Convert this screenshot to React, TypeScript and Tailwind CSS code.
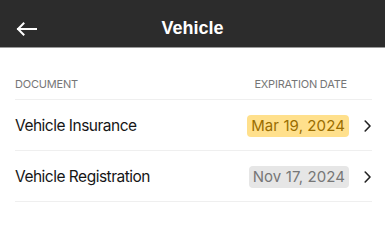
type Doc = {
  name: string;
  date: string;
  tone: 'warn' | 'muted';
};

const docs: Doc[] = [
  { name: 'Vehicle Insurance', date: 'Mar 19, 2024', tone: 'warn' },
  { name: 'Vehicle Registration', date: 'Nov 17, 2024', tone: 'muted' },
];

function BackArrow() {
  return (
    <svg width="22" height="14" viewBox="0 0 22 14" fill="none" stroke="white" strokeWidth={2} strokeLinecap="square">
      <path d="M2 7h18" />
      <path d="M7.5 1.5L2 7l5.5 5.5" />
    </svg>
  );
}

function Chevron() {
  return (
    <svg width="7" height="12" viewBox="0 0 7 12" fill="none" stroke="#222" strokeWidth={1.6} strokeLinecap="round" strokeLinejoin="round">
      <path d="M1.2 1l4.8 5-4.8 5" />
    </svg>
  );
}

export default function App() {
  return (
    <div className="w-[385px] h-[243px] bg-white font-['Inter',sans-serif]">
      {/* Top bar */}
      <div className="relative h-[48px] bg-[#2c2c2c] border-b border-[#9a9a9a] flex items-center justify-center pt-[10px]">
        <button type="button" className="absolute left-[16px] top-[22px]" aria-label="Back">
          <BackArrow />
        </button>
        <h1 className="text-white text-[18px] font-bold font-['Liberation_Sans',Arial,sans-serif]">
          Vehicle
        </h1>
      </div>

      <div className="ml-[15px] mr-[13px]">
        {/* Column headings */}
        <div className="h-[52px] flex items-end justify-between pb-[7px] pr-[25px] border-b border-[#efefef] text-[11px] text-[#767676] tracking-[-0.2px]">
          <span>DOCUMENT</span>
          <span>EXPIRATION DATE</span>
        </div>

        {docs.map((doc) => (
          <div key={doc.name} className="h-[51px] flex items-center justify-between border-b border-[#efefef] pt-[2px]">
            <span className="text-[15.5px] text-[#161616] tracking-[-0.5px]">{doc.name}</span>
            <div className="flex items-center">
              <span
                className={
                  doc.tone === 'warn'
                    ? 'h-[22px] px-[4px] rounded-[4px] flex items-center text-[15px] tracking-[0.1px] bg-[#ffe08c] text-[#9a6d00]'
                    : 'h-[22px] px-[4px] rounded-[4px] flex items-center text-[15px] tracking-[0.1px] bg-[#e6e6e6] text-[#777777]'
                }
              >
                {doc.date}
              </span>
              <span className="ml-[15px] mr-[1px] flex">
                <Chevron />
              </span>
            </div>
          </div>
        ))}
      </div>
    </div>
  );
}
